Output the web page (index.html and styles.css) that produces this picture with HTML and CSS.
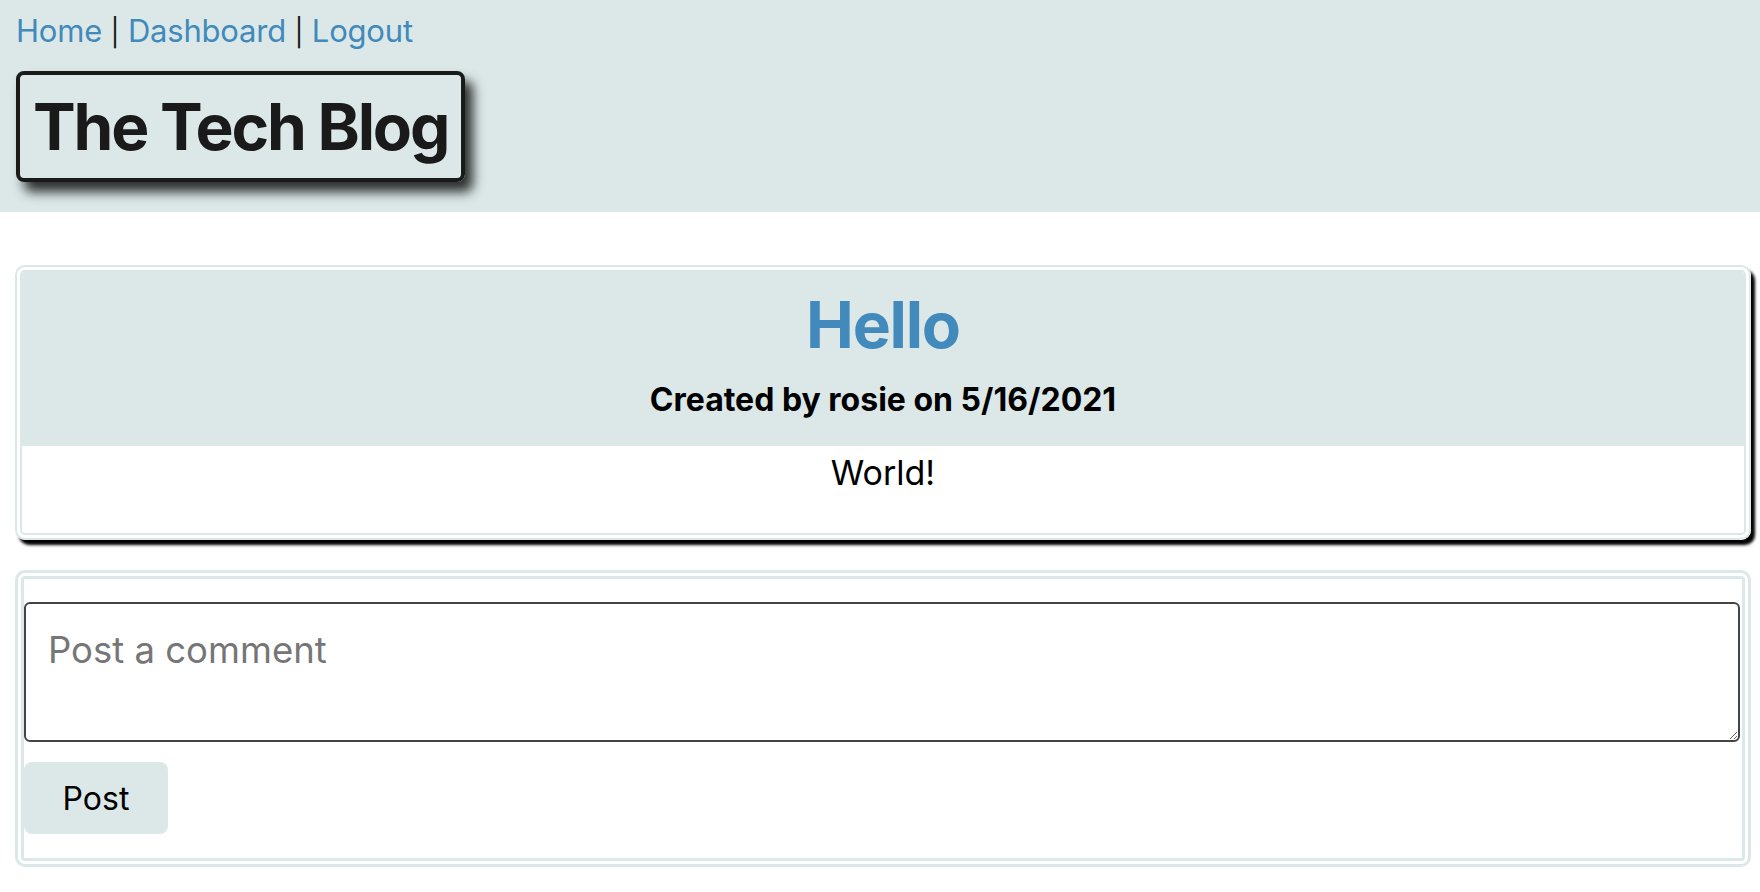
FILE: index.html
```html
<!DOCTYPE html>
<html lang="en">
<head>
<meta charset="utf-8">
<title>The Tech Blog</title>
<link rel="stylesheet" href="styles.css">
</head>
<body>
<header class="site-header">
  <nav class="nav">
    <a href="#" class="nav-link">Home</a> <span class="nav-sep">|</span> <a href="#" class="nav-link">Dashboard</a> <span class="nav-sep">|</span> <a href="#" class="nav-link">Logout</a>
  </nav>
  <div class="brand">
    <h1 class="brand-title">The Tech Blog</h1>
  </div>
</header>
<main class="content">
  <article class="post">
    <div class="post-header">
      <h2 class="post-title">Hello</h2>
      <h3 class="post-meta">Created by rosie on 5/16/2021</h3>
    </div>
    <div class="post-body">
      <p class="post-text">World!</p>
    </div>
  </article>
  <form class="comment-form">
    <textarea class="comment-input" placeholder="Post a comment"></textarea>
    <button type="button" class="comment-btn">Post</button>
  </form>
</main>
</body>
</html>
```
FILE: styles.css
```css
* { box-sizing: border-box; }
body {
  margin: 0;
  font-family: Inter, "Noto Sans", sans-serif;
  color: #000;
  background: #fff;
}
.site-header {
  background: #dce8e8;
  height: 212px;
  padding: 11px 16px 0;
  display: flex;
  flex-direction: column;
  align-items: flex-start;
  gap: 19px;
}
.nav {
  font-size: 31px;
  line-height: 39px;
  letter-spacing: -0.2px;
  color: #1a1a1a;
}
.nav-sep {
  font-size: 27px;
}
.nav-link {
  color: #418abb;
  text-decoration: none;
}
.brand {
  border: 4px solid #1a1a1a;
  border-radius: 8px;
  padding: 0 13px;
  box-shadow: 8px 10px 12px rgba(0, 0, 0, 0.8);
}
.brand-title {
  margin: 0;
  font-size: 64px;
  line-height: 103px;
  font-weight: 700;
  color: #1a1a1a;
  letter-spacing: -2.2px;
}
.content {
  padding: 53px 9px 20px 15px;
  display: flex;
  flex-direction: column;
  gap: 30px;
}
.post {
  border: 7px double #dce8e8;
  border-radius: 10px;
  box-shadow: 4px 5px 3px #000;
  overflow: hidden;
}
.post-header {
  background: #dce8e8;
  text-align: center;
  padding: 14px 0 27px;
}
.post-title {
  margin: 0;
  font-size: 64px;
  line-height: 78px;
  font-weight: 700;
  color: #418abb;
  letter-spacing: -1.2px;
}
.post-meta {
  margin: 16px 0 0;
  font-size: 32px;
  line-height: 39px;
  font-weight: 700;
}
.post-body {
  text-align: center;
  padding: 6px 0 40px;
}
.post-text {
  margin: 0;
  font-size: 34px;
  line-height: 41px;
}
.comment-form {
  border: 9px double #dce8e8;
  border-radius: 10px;
  padding: 23px 2px 24px 0;
  display: flex;
  flex-direction: column;
  align-items: flex-start;
  gap: 20px;
}
.comment-input {
  width: 100%;
  height: 140px;
  border: 2px solid #444;
  border-radius: 6px;
  padding: 24px 22px 10px;
  font-family: Inter, "Noto Sans", sans-serif;
  font-size: 36.5px;
  line-height: 44px;
  resize: vertical;
}
.comment-input::placeholder {
  color: #767676;
}
.comment-btn {
  width: 144px;
  height: 72px;
  border: none;
  border-radius: 8px;
  background: #dce8e8;
  font-family: Inter, "Noto Sans", sans-serif;
  font-size: 32px;
  color: #000;
}
```
